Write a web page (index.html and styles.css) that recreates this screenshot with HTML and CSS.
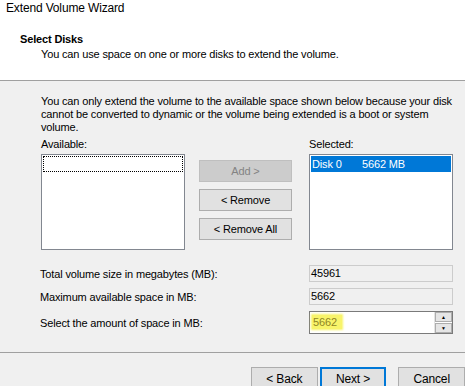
FILE: index.html
```html
<!DOCTYPE html>
<html lang="en">
<head>
    <meta charset="UTF-8">
    <title>Extend Volume Wizard</title>
    <link rel="stylesheet" href="styles.css">
</head>
<body>
    <div class="wizard">
        <div class="header">
            <div class="window-title">Extend Volume Wizard</div>
            <div class="page-title">Select Disks</div>
            <div class="page-subtitle">You can use space on one or more disks to extend the volume.</div>
        </div>

        <div class="content">
            <p class="note">You can only extend the volume to the available space shown below because your disk cannot be converted to dynamic or the volume being extended is a boot or system volume.</p>

            <div class="disk-picker">
                <div class="disk-column">
                    <label class="list-label">Available:</label>
                    <div class="listbox">
                        <div class="focus-row"></div>
                    </div>
                </div>
                <div class="move-buttons">
                    <button class="btn" disabled>Add &gt;</button>
                    <button class="btn">&lt; Remove</button>
                    <button class="btn">&lt; Remove All</button>
                </div>
                <div class="disk-column">
                    <label class="list-label">Selected:</label>
                    <div class="listbox">
                        <div class="list-item selected">
                            <span class="disk-name">Disk 0</span>
                            <span>5662 MB</span>
                        </div>
                    </div>
                </div>
            </div>

            <div class="size-rows">
                <div class="size-row">
                    <span class="size-label">Total volume size in megabytes (MB):</span>
                    <div class="field readonly">45961</div>
                </div>
                <div class="size-row">
                    <span class="size-label">Maximum available space in MB:</span>
                    <div class="field readonly">5662</div>
                </div>
                <div class="size-row">
                    <span class="size-label">Select the amount of space in MB:</span>
                    <div class="field spin">
                        <span class="spin-value"><span class="marker">5662</span></span>
                        <div class="spin-buttons">
                            <div class="spin-btn">&#9650;</div>
                            <div class="spin-btn">&#9660;</div>
                        </div>
                    </div>
                </div>
            </div>
        </div>

        <div class="footer">
            <button class="btn nav-btn">&lt; Back</button>
            <button class="btn nav-btn default">Next &gt;</button>
            <button class="btn nav-btn cancel">Cancel</button>
        </div>
    </div>
</body>
</html>
```

FILE: styles.css
```css
body {
    margin: 0;
    background: #f0f0f0;
    font-family: "Liberation Sans", Arial, sans-serif;
    font-size: 11px;
    letter-spacing: -0.15px;
    color: #000;
    overflow: hidden;
}

.wizard {
    width: 465px;
    height: 386px;
}

.header {
    background: #fff;
    height: 81px;
    border-bottom: 1px solid #a0a0a0;
    box-sizing: border-box;
    padding-top: 1px;
}

.window-title {
    font-size: 12px;
    line-height: 15px;
    padding-left: 6px;
}

.page-title {
    font-weight: bold;
    font-size: 11px;
    line-height: 13px;
    margin-top: 17px;
    padding-left: 20px;
}

.page-subtitle {
    line-height: 13px;
    margin-top: 2px;
    padding-left: 41px;
}

.content {
    padding-left: 41px;
}

.note {
    margin: 14px 0 0 0;
    width: 420px;
    line-height: 13px;
}

.disk-picker {
    display: flex;
    margin-top: 4px;
}

.disk-column {
    display: flex;
    flex-direction: column;
    width: 144px;
}

.list-label {
    line-height: 13px;
    height: 16px;
}

.listbox {
    height: 96px;
    background: #fff;
    border: 1px solid #828790;
    box-sizing: border-box;
    padding: 1px;
}

.focus-row {
    height: 16px;
    border: 1px dotted #000;
    box-sizing: border-box;
}

.list-item {
    height: 16px;
    line-height: 16px;
    padding-left: 1px;
    display: flex;
}

.list-item.selected {
    background: #0078d7;
    color: #fff;
}

.disk-name {
    width: 50px;
}

.move-buttons {
    display: flex;
    flex-direction: column;
    gap: 7px;
    margin: 22px 17px 0 14px;
}

.btn {
    font-family: inherit;
    font-size: 11px;
    letter-spacing: -0.15px;
    width: 93px;
    height: 22px;
    padding: 0;
    background: #e1e1e1;
    border: 1px solid #adadad;
    color: #000;
}

.btn:disabled {
    background: #cccccc;
    border-color: #bfbfbf;
    color: #838383;
}

.size-rows {
    margin-top: 15px;
    display: flex;
    flex-direction: column;
    gap: 6px;
}

.size-row {
    display: flex;
    align-items: center;
}

.size-label {
    width: 268px;
    margin-left: -1px;
    margin-right: 1px;
}

.field {
    width: 144px;
    box-sizing: border-box;
    line-height: 14px;
}

.field.readonly {
    height: 17px;
    border: 1px solid #cccccc;
    padding-left: 1px;
}

.field.spin {
    height: 23px;
    background: #fff;
    border: 1px solid #7a7a7a;
    display: flex;
    justify-content: space-between;
}

.spin-value {
    padding: 3px 0 0 2px;
}

.marker {
    background: #f8f46a;
    color: #8f8525;
    padding: 1px 5px 1px 1px;
    box-shadow: 0 0 2px 1px #f8f46a;
}

.spin-buttons {
    width: 17px;
    display: flex;
    flex-direction: column;
    gap: 1px;
    border-left: 1px solid #e3e3e3;
}

.spin-btn {
    flex: 1;
    background: #e5e5e5;
    border: 1px solid #adadad;
    font-size: 5px;
    line-height: 8px;
    text-align: center;
}

.footer {
    margin-top: 18px;
    border-top: 1px solid #a0a0a0;
    display: flex;
    padding: 14px 0 0 251px;
}

.nav-btn {
    width: 73px;
    height: 23px;
    font-size: 12px;
}

.nav-btn.default {
    border: 2px solid #0078d7;
    margin-left: 2px;
}

.nav-btn.cancel {
    margin-left: 12px;
}
```
